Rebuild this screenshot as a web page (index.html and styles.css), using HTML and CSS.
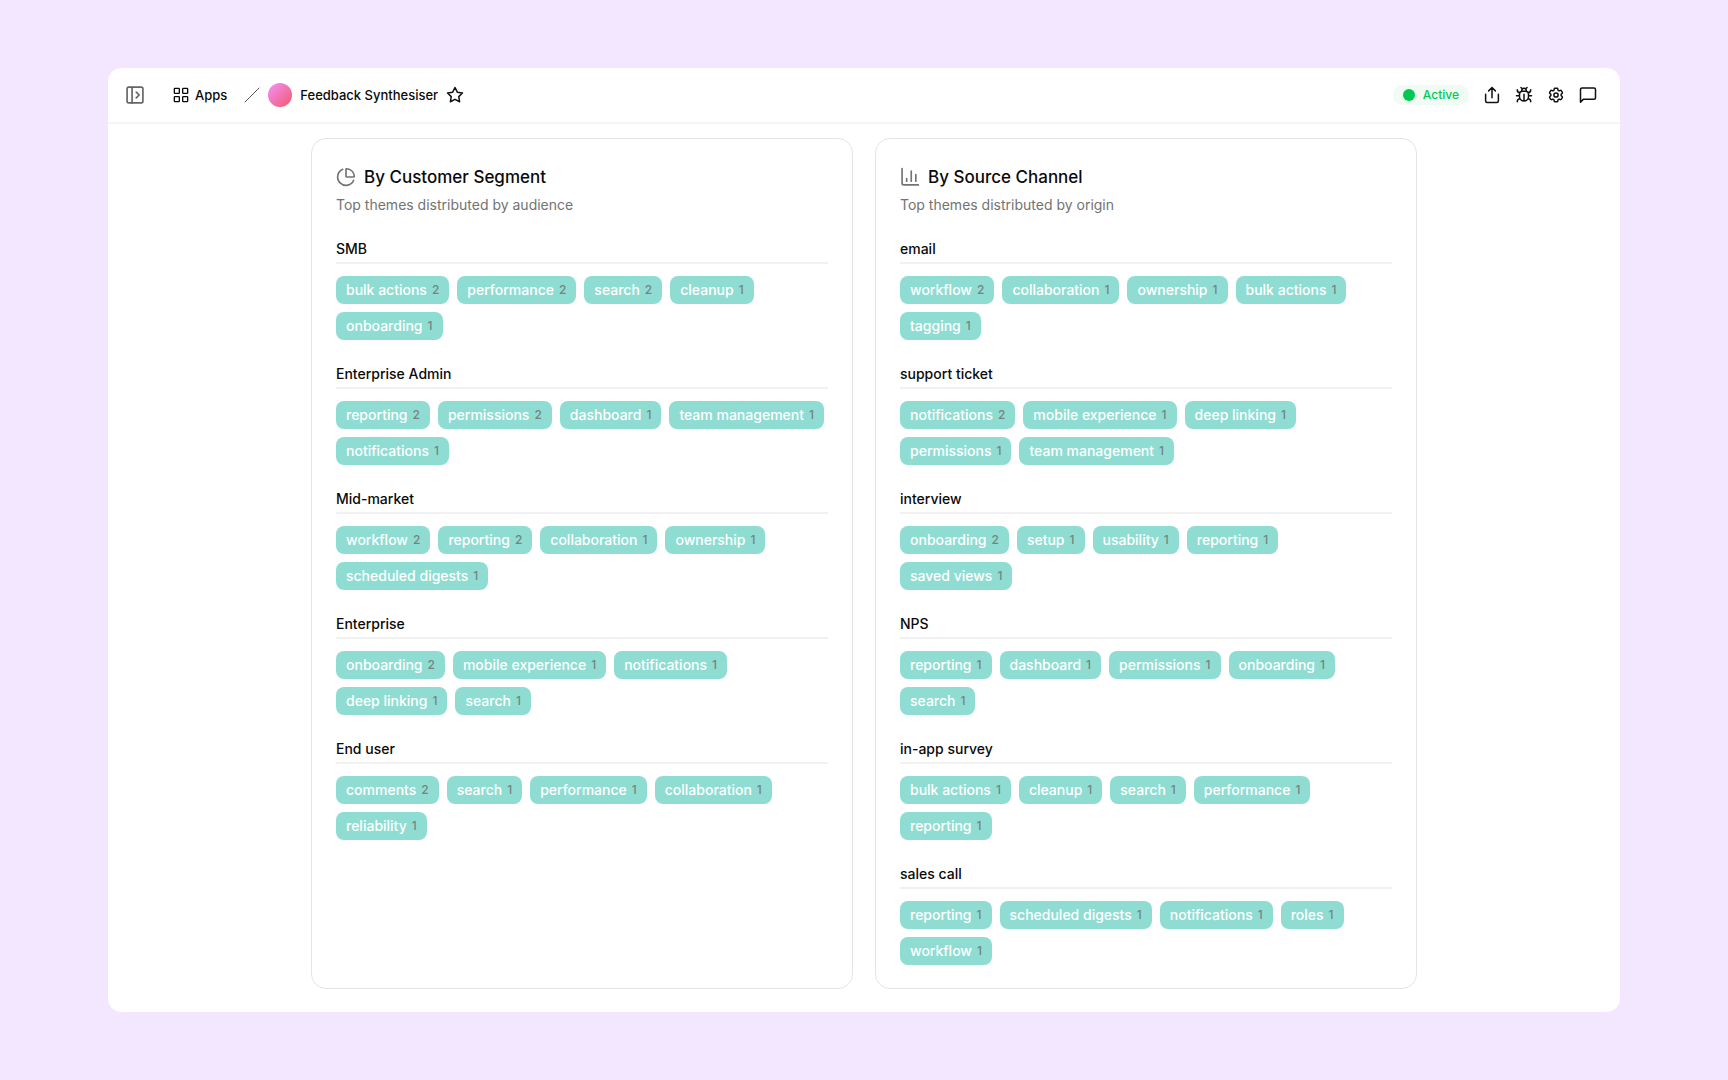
FILE: index.html
```html
<!DOCTYPE html>
<html lang="en">
<head>
  <meta charset="UTF-8" />
  <meta name="viewport" content="width=device-width, initial-scale=1" />
  <title>Feedback Synthesiser</title>
  <link rel="stylesheet" href="styles.css">
</head>
<body>
  <div class="window">
    <!-- Top bar -->
    <header class="topbar">
      <button class="icon-btn sidebar-btn" aria-label="Toggle sidebar">
        <svg viewBox="0 0 24 24"><rect x="2.5" y="2.5" width="19" height="19" rx="2"/><path d="M8.5 2.5v19M13.5 8.5 17 12l-3.500 3.500"/></svg>
      </button>
      <nav class="breadcrumb">
        <a class="apps-link" href="#">
          <svg viewBox="0 0 24 24"><rect x="2" y="2" width="7.500" height="7.500" rx="1"/><rect x="14.500" y="2" width="7.500" height="7.500" rx="1"/><rect x="2" y="14.500" width="7.500" height="7.500" rx="1"/><rect x="14.500" y="14.500" width="7.500" height="7.500" rx="1"/></svg>
          Apps
        </a>
        <svg class="slash" viewBox="0 0 16 16"><path d="M1 15 15 1"/></svg>
        <span class="app-avatar"></span>
        <span class="app-name">Feedback Synthesiser</span>
        <button class="icon-btn" aria-label="Favourite">
          <svg viewBox="0 0 24 24"><path d="m12 2 3.090 6.260L22 9.270l-5 4.870 1.180 6.880L12 17.770l-6.180 3.250L7 14.140 2 9.270l6.910-1.010z"/></svg>
        </button>
      </nav>
      <div class="actions">
        <span class="status">Active</span>
        <button class="icon-btn" aria-label="Share">
          <svg viewBox="0 0 24 24"><path d="M3.500 11v9a2 2 0 0 0 2 2h13a2 2 0 0 0 2-2v-9M12 15.500V2M7.500 6.500 12 2l4.500 4.500"/></svg>
        </button>
        <button class="icon-btn" aria-label="Report a bug">
          <svg viewBox="0 0 24 24"><path d="m8 2 1.880 1.880M14.120 3.880 16 2M9 7.130v-1a3 3 0 1 1 6 0v1M12 20c-3.300 0-6-2.700-6-6v-3a4 4 0 0 1 4-4h4a4 4 0 0 1 4 4v3c0 3.300-2.700 6-6 6M12 20v-9M6.530 9C4.600 8.800 3 7.100 3 5M6 13H2M3 21c0-2.100 1.700-3.900 3.800-4M20.970 5c0 2.100-1.600 3.800-3.500 4M22 13h-4M17.200 17c2.100.1 3.800 1.900 3.800 4"/></svg>
        </button>
        <button class="icon-btn" aria-label="Settings">
          <svg viewBox="0 0 24 24"><path d="M9.594 3.940c.090-.542.560-.940 1.110-.940h2.593c.550 0 1.020.398 1.110.940l.213 1.281c.063.374.313.686.645.870.074.040.147.083.220.127.325.196.720.257 1.075.124l1.217-.456a1.125 1.125 0 0 1 1.370.490l1.296 2.247a1.125 1.125 0 0 1-.260 1.431l-1.003.827c-.293.241-.438.613-.430.992a7.723 7.723 0 0 1 0 .255c-.008.378.137.750.430.991l1.004.827c.424.350.534.955.260 1.430l-1.298 2.247a1.125 1.125 0 0 1-1.369.491l-1.217-.456c-.355-.133-.750-.072-1.076.124a6.470 6.470 0 0 1-.220.128c-.331.183-.581.495-.644.869l-.213 1.281c-.090.543-.560.940-1.110.940h-2.594c-.550 0-1.019-.398-1.110-.940l-.213-1.281c-.062-.374-.312-.686-.644-.870a6.520 6.520 0 0 1-.220-.127c-.325-.196-.720-.257-1.076-.124l-1.217.456a1.125 1.125 0 0 1-1.369-.490l-1.297-2.247a1.125 1.125 0 0 1 .260-1.431l1.004-.827c.292-.240.437-.613.430-.991a6.932 6.932 0 0 1 0-.255c.007-.380-.138-.751-.430-.992l-1.004-.827a1.125 1.125 0 0 1-.260-1.430l1.297-2.247a1.125 1.125 0 0 1 1.370-.491l1.216.456c.356.133.751.072 1.076-.124.072-.044.146-.086.220-.128.332-.183.582-.495.644-.869z"/><circle cx="12" cy="12" r="2.800"/></svg>
        </button>
        <button class="icon-btn" aria-label="Comments">
          <svg viewBox="0 0 24 24"><path d="M22 15.500a2 2 0 0 1-2 2H6l-4 4V4.500a2 2 0 0 1 2-2h16a2 2 0 0 1 2 2z"/></svg>
        </button>
      </div>
    </header>

    <main class="cards">
      <!-- By Customer Segment -->
      <section class="card">
        <h2>
          <svg viewBox="0 0 24 24"><path d="M21 12c.550 0 1-.450.950-1A10 10 0 0 0 13 2.050c-.550-.050-1 .400-1 .950v8a1 1 0 0 0 1 1z"/><path d="M21.210 15.890A10 10 0 1 1 8 2.830"/></svg>
          By Customer Segment
        </h2>
        <p class="subtitle">Top themes distributed by audience</p>
        <div class="groups">
          <div class="group">
            <h3>SMB</h3>
            <ul class="tags">
              <li>bulk actions <span>2</span></li>
              <li>performance <span>2</span></li>
              <li>search <span>2</span></li>
              <li>cleanup <span>1</span></li>
              <li>onboarding <span>1</span></li>
            </ul>
          </div>
          <div class="group">
            <h3>Enterprise Admin</h3>
            <ul class="tags">
              <li>reporting <span>2</span></li>
              <li>permissions <span>2</span></li>
              <li>dashboard <span>1</span></li>
              <li>team management <span>1</span></li>
              <li>notifications <span>1</span></li>
            </ul>
          </div>
          <div class="group">
            <h3>Mid-market</h3>
            <ul class="tags">
              <li>workflow <span>2</span></li>
              <li>reporting <span>2</span></li>
              <li>collaboration <span>1</span></li>
              <li>ownership <span>1</span></li>
              <li>scheduled digests <span>1</span></li>
            </ul>
          </div>
          <div class="group">
            <h3>Enterprise</h3>
            <ul class="tags">
              <li>onboarding <span>2</span></li>
              <li>mobile experience <span>1</span></li>
              <li>notifications <span>1</span></li>
              <li>deep linking <span>1</span></li>
              <li>search <span>1</span></li>
            </ul>
          </div>
          <div class="group">
            <h3>End user</h3>
            <ul class="tags">
              <li>comments <span>2</span></li>
              <li>search <span>1</span></li>
              <li>performance <span>1</span></li>
              <li>collaboration <span>1</span></li>
              <li>reliability <span>1</span></li>
            </ul>
          </div>
        </div>
      </section>

      <!-- By Source Channel -->
      <section class="card">
        <h2>
          <svg viewBox="0 0 24 24"><path d="M2.500 2v17.500a2 2 0 0 0 2 2H22M8 17v-3M13.500 17V5M19 17V9"/></svg>
          By Source Channel
        </h2>
        <p class="subtitle">Top themes distributed by origin</p>
        <div class="groups">
          <div class="group">
            <h3>email</h3>
            <ul class="tags">
              <li>workflow <span>2</span></li>
              <li>collaboration <span>1</span></li>
              <li>ownership <span>1</span></li>
              <li>bulk actions <span>1</span></li>
              <li>tagging <span>1</span></li>
            </ul>
          </div>
          <div class="group">
            <h3>support ticket</h3>
            <ul class="tags">
              <li>notifications <span>2</span></li>
              <li>mobile experience <span>1</span></li>
              <li>deep linking <span>1</span></li>
              <li>permissions <span>1</span></li>
              <li>team management <span>1</span></li>
            </ul>
          </div>
          <div class="group">
            <h3>interview</h3>
            <ul class="tags">
              <li>onboarding <span>2</span></li>
              <li>setup <span>1</span></li>
              <li>usability <span>1</span></li>
              <li>reporting <span>1</span></li>
              <li>saved views <span>1</span></li>
            </ul>
          </div>
          <div class="group">
            <h3>NPS</h3>
            <ul class="tags">
              <li>reporting <span>1</span></li>
              <li>dashboard <span>1</span></li>
              <li>permissions <span>1</span></li>
              <li>onboarding <span>1</span></li>
              <li>search <span>1</span></li>
            </ul>
          </div>
          <div class="group">
            <h3>in-app survey</h3>
            <ul class="tags">
              <li>bulk actions <span>1</span></li>
              <li>cleanup <span>1</span></li>
              <li>search <span>1</span></li>
              <li>performance <span>1</span></li>
              <li>reporting <span>1</span></li>
            </ul>
          </div>
          <div class="group">
            <h3>sales call</h3>
            <ul class="tags">
              <li>reporting <span>1</span></li>
              <li>scheduled digests <span>1</span></li>
              <li>notifications <span>1</span></li>
              <li>roles <span>1</span></li>
              <li>workflow <span>1</span></li>
            </ul>
          </div>
        </div>
      </section>
    </main>
  </div>
</body>
</html>
```

FILE: styles.css
```css
* {
  box-sizing: border-box;
}
body {
  margin: 0;
  padding: 68px 108px;
  min-height: 100vh;
  background: #f3e6ff;
  font-family: Inter, "Liberation Sans", sans-serif;
  font-size: 14px;
  line-height: 20px;
  color: #0a0a0a;
}
h2, h3, p, ul {
  margin: 0;
  padding: 0;
}
svg {
  display: block;
  flex: none;
  fill: none;
  stroke: currentColor;
  stroke-width: 2;
  stroke-linecap: round;
  stroke-linejoin: round;
}
/* White app window */
.window {
  background: #fff;
  border-radius: 14px;
}
/* Top bar */
.topbar {
  display: flex;
  align-items: center;
  height: 56px;
  padding: 0 23px 0 17px;
  border-bottom: 2px solid #f5f5f5;
}
.icon-btn {
  display: flex;
  padding: 0;
  border: none;
  background: none;
  color: #111;
  cursor: pointer;
}
.icon-btn svg {
  width: 18px;
  height: 18px;
}
.sidebar-btn {
  color: #666;
}
.sidebar-btn svg {
  width: 20px;
  height: 20px;
}
.breadcrumb {
  display: flex;
  align-items: center;
  gap: 8px;
  margin-left: 28px;
  font-size: 13px;
  font-weight: 500;
}
.apps-link {
  display: flex;
  align-items: center;
  gap: 6px;
  margin-right: 9px;
  color: inherit;
  text-decoration: none;
}
.apps-link svg {
  width: 16px;
  height: 16px;
}
.slash {
  width: 16px;
  height: 16px;
  stroke: #555;
  stroke-width: 1;
}
.app-avatar {
  width: 24px;
  height: 24px;
  border-radius: 50%;
  background: linear-gradient(135deg, #f093fb, #f5576c);
}
.actions {
  display: flex;
  align-items: center;
  gap: 14px;
  margin-left: auto;
}
/* Status pill */
.status {
  display: flex;
  align-items: center;
  gap: 8px;
  padding: 0 10px;
  border-radius: 10px;
  background: #effbf3;
  color: #00c951;
  font-size: 12px;
  font-weight: 500;
}
.status::before {
  content: "";
  width: 12px;
  height: 12px;
  border-radius: 50%;
  background: #00c951;
}
/* Cards */
.cards {
  display: grid;
  grid-template-columns: 1fr 1fr;
  gap: 22px;
  max-width: 1106px;
  margin: 0 auto;
  padding: 14px 0 23px;
}
.card {
  padding: 24px 24px 23px;
  border: 1px solid #e5e5e5;
  border-radius: 15px;
}
.card h2 {
  display: flex;
  align-items: center;
  gap: 8px;
  font-size: 17px;
  line-height: 28px;
  font-weight: 500;
}
.card h2 svg {
  width: 20px;
  height: 20px;
  color: #737373;
}
.subtitle {
  margin-top: 4px;
  color: #737373;
}
.groups {
  display: flex;
  flex-direction: column;
  gap: 24px;
  margin-top: 24px;
}
.group h3 {
  padding-bottom: 3px;
  border-bottom: 2px solid #f1f1f1;
  font-size: 14px;
  font-weight: 500;
}
/* Theme tags */
.tags {
  display: flex;
  flex-wrap: wrap;
  gap: 8px;
  margin-top: 12px;
  list-style: none;
}
.tags li {
  display: flex;
  align-items: center;
  gap: 5px;
  padding: 4px 10px;
  border-radius: 8px;
  background: #8fddd2;
  color: #fff;
  font-weight: 500;
}
.tags span {
  color: #737373;
  font-size: 12px;
  opacity: 0.85;
}
```
